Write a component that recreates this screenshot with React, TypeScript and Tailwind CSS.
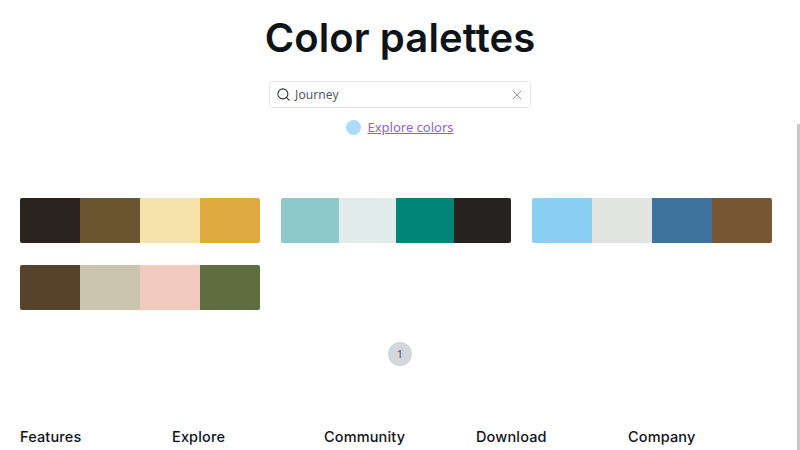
import { Search, X } from "lucide-react";

const palettes = [
  ["#2a2320", "#6b5530", "#f5e2a8", "#dea93e"],
  ["#8cc9c8", "#e1ebe9", "#008577", "#262220"],
  ["#8acef2", "#e1e4e1", "#3d739d", "#775735"],
  ["#57432c", "#cbc4af", "#f2cbbe", "#5e6e3f"],
];

const footerLinks = ["Features", "Explore", "Community", "Download", "Company"];

export default function App() {
  return (
    <div className="relative h-[450px] w-[800px] overflow-hidden bg-white font-['Inter',sans-serif]">
      {/* Header */}
      <h1 className="pt-[14px] text-center text-[40px] leading-[48px] font-[560] tracking-[0.1px] text-[#0e1318]">
        Color palettes
      </h1>
      <div className="mt-[19px] flex justify-center">
        <div className="flex h-[27px] w-[262px] items-center rounded-[4px] border border-[#e3e5e8] bg-white pr-[5px] pl-[6px]">
          <Search className="h-[15px] w-[15px] text-[#2a2f35]" strokeWidth={1.7} />
          <span className="ml-[4px] flex-1 font-['Noto_Sans',sans-serif] text-[12px] tracking-[0.1px] text-[#55595f]">
            Journey
          </span>
          <X className="h-[16px] w-[16px] text-[#8a8f95]" strokeWidth={1.4} />
        </div>
      </div>
      <div className="mt-[9px] flex items-center justify-center gap-[6px]">
        <span className="h-[15px] w-[15px] rounded-full bg-[#abdcfb]" />
        <a href="#" className="font-['Noto_Sans',sans-serif] text-[13px] leading-[20px] text-[#8f5fe0] underline">
          Explore colors
        </a>
      </div>

      {/* Palettes */}
      <div className="mt-[61px] grid grid-cols-[240px_230px_240px] gap-x-[21px] gap-y-[22px] pl-[20px]">
        {palettes.map((colors) => (
          <div key={colors.join()} className="flex h-[45px] overflow-hidden rounded-[2px]">
            {colors.map((color) => (
              <div key={color} className="flex-1" style={{ backgroundColor: color }} />
            ))}
          </div>
        ))}
      </div>

      {/* Pagination */}
      <div className="mt-[32px] flex justify-center">
        <span className="flex h-[24px] w-[24px] items-center justify-center rounded-full bg-[#d3d6da] font-['Noto_Sans',sans-serif] text-[11px] text-[#55595f]">
          1
        </span>
      </div>

      {/* Footer */}
      <div className="mt-[62px] grid grid-cols-[repeat(5,152px)] pl-[20px]">
        {footerLinks.map((name) => (
          <div key={name} className="text-[14.5px] leading-[18px] font-medium tracking-[0.15px] text-[#0e1318]">
            {name}
          </div>
        ))}
      </div>

      {/* Scrollbar */}
      <div className="absolute top-[124px] right-0 bottom-0 w-[3px] bg-[#c8c8c8]" />
    </div>
  );
}
